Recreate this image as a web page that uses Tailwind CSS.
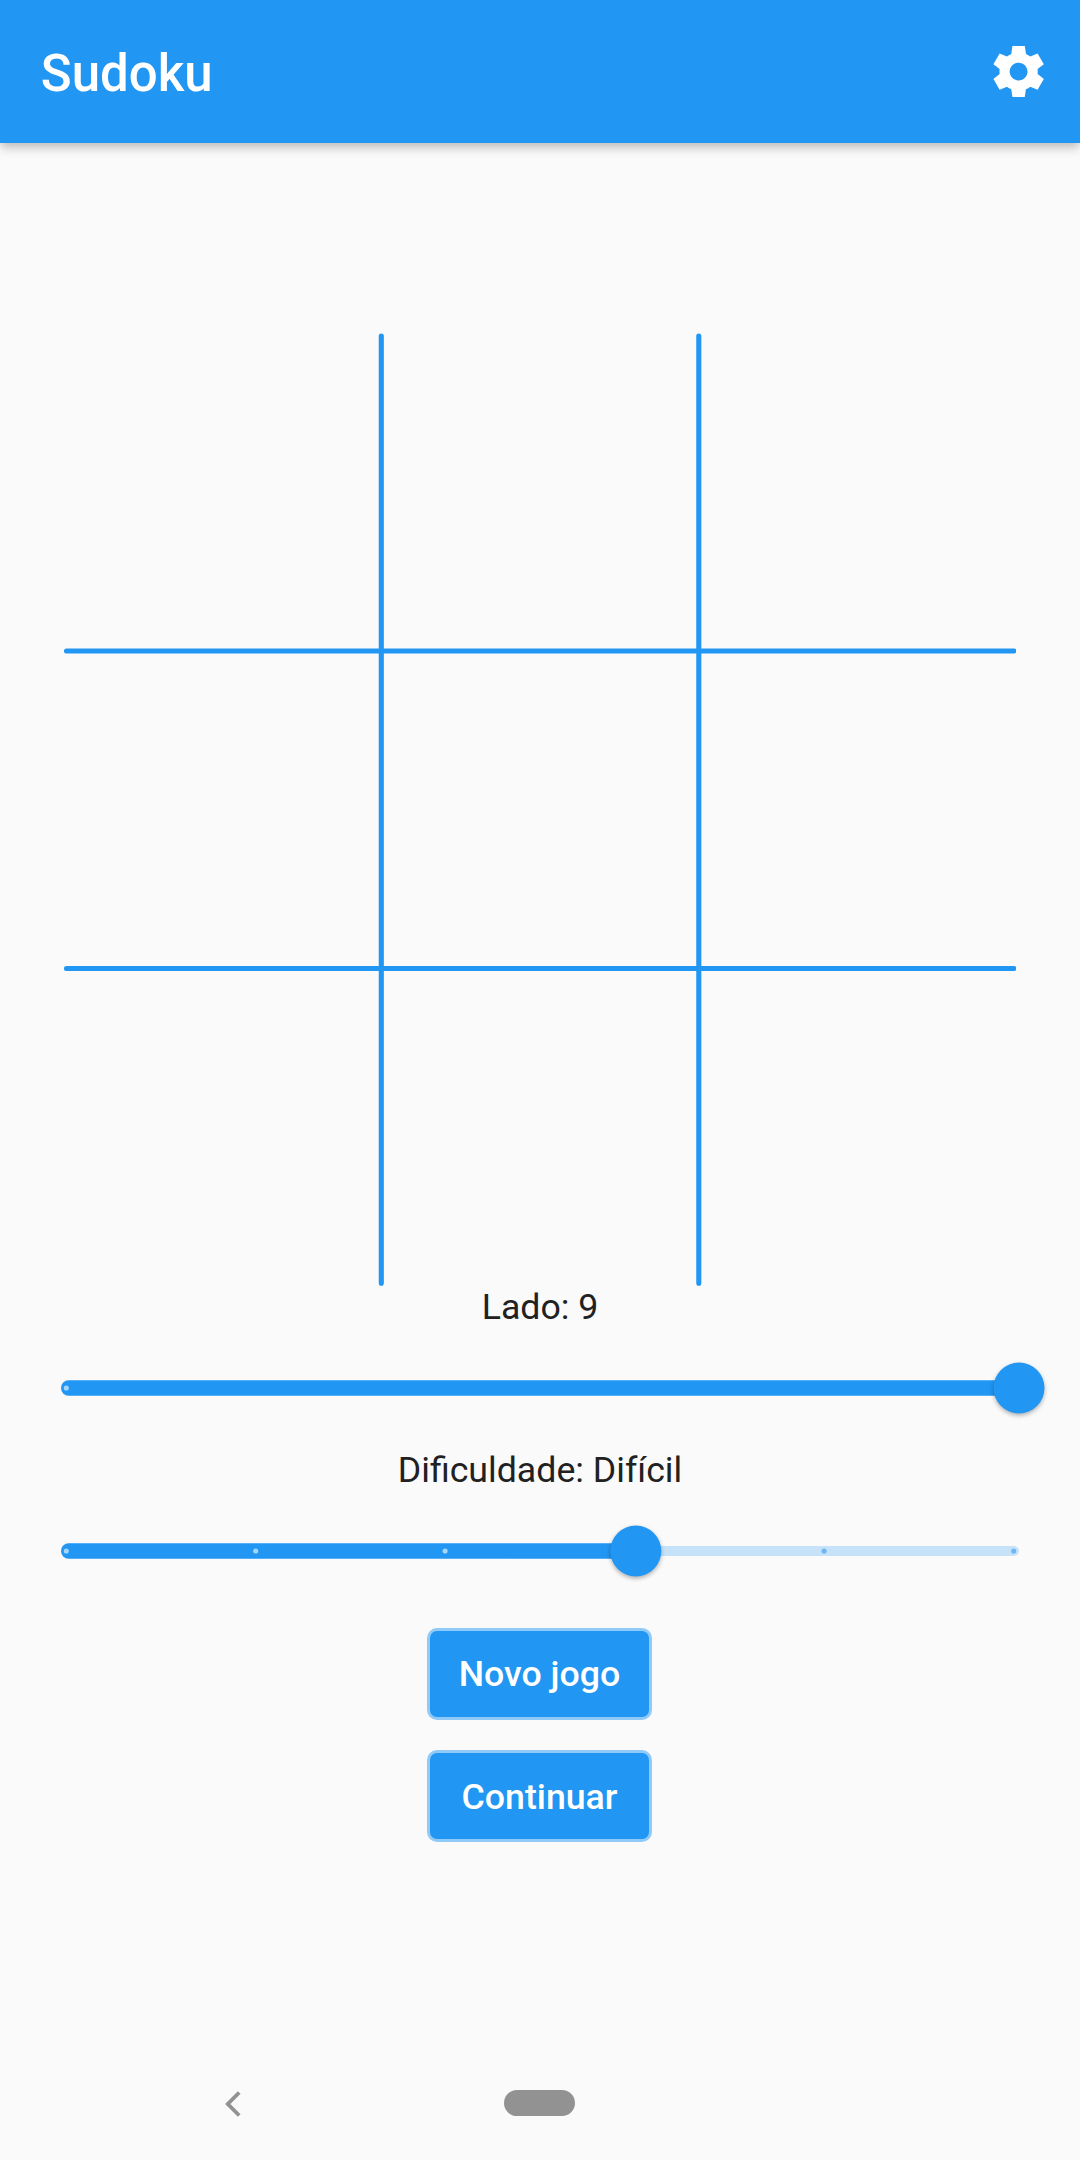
<!DOCTYPE html>
<html lang="pt">
<head>
<meta charset="utf-8">
<meta name="viewport" content="width=device-width">
<title>Sudoku</title>
<script src="https://cdn.jsdelivr.net/npm/@tailwindcss/browser@4"></script>
</head>
<body class="bg-[#fafafa] font-['Roboto',sans-serif] text-[#212121]">
<div class="flex h-[2160px] w-[1080px] flex-col overflow-hidden">
  <header class="z-10 flex h-[142.8px] shrink-0 items-center justify-between bg-[#2196f3] pr-[30.4px] pl-[40.8px] text-white shadow-[0_4px_8px_-2px_rgba(0,0,0,0.16),0_7px_10px_rgba(0,0,0,0.09),0_2px_16px_rgba(0,0,0,0.06)]">
    <h1 class="pt-[5px] text-[51px] leading-[60px] font-medium">Sudoku</h1>
    <button aria-label="Configurações" class="size-[61.2px]">
      <svg viewBox="0 0 24 24" class="size-full" fill="currentColor"><path d="M19.44 12.99l-.01.02c.04-.33.08-.67.08-1.01 0-.34-.03-.66-.07-.99l.01.02 2.44-1.92-2.43-4.22-2.87 1.16.01.01c-.52-.4-1.09-.74-1.71-1h.01L14.44 2H9.57l-.44 3.07h.01c-.62.26-1.19.6-1.71 1l.01-.01-2.88-1.17-2.44 4.22 2.44 1.92.01-.02c-.04.33-.07.65-.07.99 0 .34.03.68.08 1.01l-.01-.02-2.1 1.65-.33.26 2.43 4.2 2.88-1.15-.02-.04c.53.41 1.1.75 1.73 1.01h-.03L9.58 22h4.85s.03-.18.06-.42l.38-2.65h-.01c.62-.26 1.2-.6 1.73-1.01l-.02.04 2.88 1.15 2.43-4.2s-.14-.12-.33-.26l-2.08-1.66zM12 15.5c-1.93 0-3.5-1.57-3.5-3.5s1.57-3.5 3.5-3.5 3.5 1.57 3.5 3.5-1.57 3.5-3.5 3.5z"/></svg>
    </button>
  </header>

  <main class="flex grow flex-col items-center pt-[190.4px]">
    <svg class="size-[952.6px] shrink-0" viewBox="0 0 952.6 952.6" stroke="#2196f3" stroke-width="5.1" stroke-linecap="round">
      <path d="M317.3 3V950.3M634.8 3V950.3M2.5 318H950M2.5 635.5H950"/>
    </svg>

    <p class="h-[41px] pt-px text-[35.7px] leading-[41px]">Lado: 9</p>
    <div class="flex h-[122px] w-[958px] items-center">
      <svg class="h-[80px] w-full overflow-visible" viewBox="61 1348 958 80">
        <rect x="61" y="1380.35" width="958" height="15.3" rx="7.65" fill="#2196f3"/>
        <circle cx="66.3" cy="1388" r="2.55" fill="#a6d5fa"/>
        <circle class="drop-shadow-[0_2px_2px_rgba(0,0,0,0.3)]" cx="1019" cy="1388" r="25.5" fill="#2196f3"/>
      </svg>
    </div>

    <p class="h-[41px] pt-px text-[35.7px] leading-[41px]">Dificuldade: Difícil</p>
    <div class="flex h-[122px] w-[958px] items-center">
      <svg class="h-[80px] w-full overflow-visible" viewBox="61 1511 958 80">
        <rect x="620" y="1545.9" width="399" height="10.2" rx="5.1" fill="#c6e2f8"/>
        <rect x="61" y="1543.35" width="575" height="15.3" rx="7.65" fill="#2196f3"/>
        <g fill="#a6d5fa"><circle cx="66.3" cy="1551" r="2.55"/><circle cx="255.7" cy="1551" r="2.55"/><circle cx="445.1" cy="1551" r="2.55"/></g>
        <g fill="#6bb7f6"><circle cx="824.1" cy="1551" r="2.55"/><circle cx="1013.7" cy="1551" r="2.55"/></g>
        <circle class="drop-shadow-[0_2px_2px_rgba(0,0,0,0.3)]" cx="635.8" cy="1551" r="25.5" fill="#2196f3"/>
      </svg>
    </div>

    <div class="mt-[16px] flex flex-col gap-[30.6px] pr-px">
      <button class="flex h-[92px] w-[225px] items-center justify-center rounded-[10px] border-3 border-[#90caf9] bg-[#2196f3] pt-px text-[35.7px] leading-[42px] font-medium text-white">Novo jogo</button>
      <button class="flex h-[92px] w-[225px] items-center justify-center rounded-[10px] border-3 border-[#90caf9] bg-[#2196f3] pt-px text-[35.7px] leading-[42px] font-medium text-white">Continuar</button>
    </div>
  </main>

  <nav class="flex h-[113px] shrink-0 items-center pl-[225px]">
    <svg class="mt-px h-[26px] w-[16px]" viewBox="0 0 16 26" fill="none" stroke="#929292" stroke-width="3.9"><path d="M14.2 1.5L2.8 13L14.2 24.5"/></svg>
    <div class="-mt-px ml-[263px] h-[26px] w-[71px] rounded-full bg-[#929292]"></div>
  </nav>
</div>
</body>
</html>
